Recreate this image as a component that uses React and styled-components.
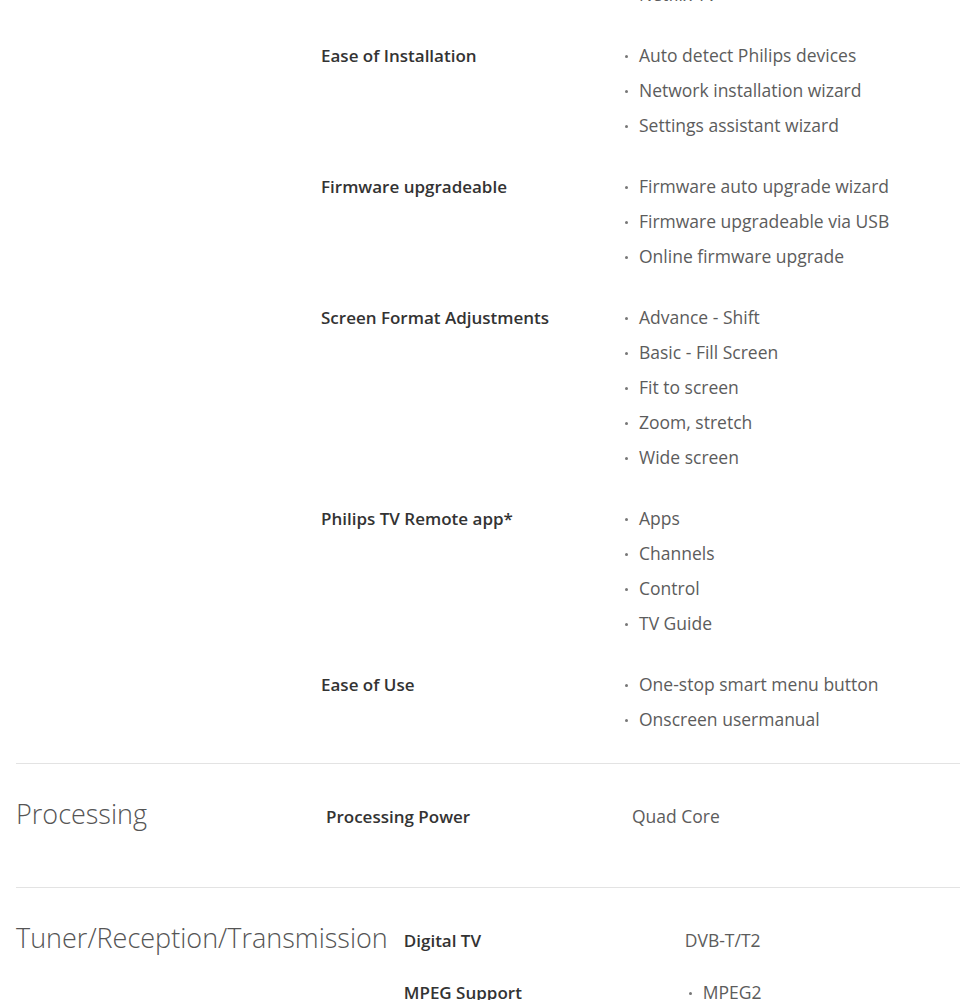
import React from "react";
import styled, { createGlobalStyle } from "styled-components";

const GlobalStyle = createGlobalStyle`
    body {
        margin: 0;
        background: #fff;
        font-family: "Open Sans", "Liberation Sans", sans-serif;
    }
`;

const sections = [
    {
        title: "",
        headW: 305,
        labelW: 303,
        pt: 0,
        pb: 0,
        top: -23,
        rows: [
            { label: "", items: ["Netflix TV"] },
            { label: "Ease of Installation", items: ["Auto detect Philips devices", "Network installation wizard", "Settings assistant wizard"] },
            { label: "Firmware upgradeable", items: ["Firmware auto upgrade wizard", "Firmware upgradeable via USB", "Online firmware upgrade"] },
            { label: "Screen Format Adjustments", items: ["Advance - Shift", "Basic - Fill Screen", "Fit to screen", "Zoom, stretch", "Wide screen"] },
            { label: "Philips TV Remote app*", items: ["Apps", "Channels", "Control", "TV Guide"] },
            { label: "Ease of Use", items: ["One-stop smart menu button", "Onscreen usermanual"] },
        ],
    },
    {
        title: "Processing",
        headW: 310,
        labelW: 306,
        pt: 35,
        pb: 36,
        rows: [{ label: "Processing Power", value: "Quad Core" }],
    },
    {
        title: "Tuner/Reception/Transmission",
        headW: 310,
        labelW: 281,
        pt: 35,
        pb: 36,
        rows: [
            { label: "Digital TV", value: "DVB-T/T2" },
            { label: "MPEG Support", items: ["MPEG2"], indent: 3 },
        ],
    },
];

const App = () => {
    return (
        <>
            <GlobalStyle />
            <Page>
                {sections.map((s, i) => (
                    <Section key={i} $pt={s.pt} $pb={s.pb} $top={s.top || 0} $last={i === sections.length - 1}>
                        <Heading $w={s.headW}>{s.title}</Heading>
                        <Table>
                            {s.rows.map((r, j) => (
                                <Row key={j} $labelW={s.labelW}>
                                    <Label>{r.label}</Label>
                                    {r.items ? (
                                        <List $indent={r.indent || 0}>
                                            {r.items.map((it) => (
                                                <Item key={it}>{it}</Item>
                                            ))}
                                        </List>
                                    ) : (
                                        <Value>{r.value}</Value>
                                    )}
                                </Row>
                            ))}
                        </Table>
                    </Section>
                ))}
            </Page>
        </>
    );
};

export default App;

const Page = styled.div`
    padding-left: 16px;
    overflow: hidden;
    height: 1000px;
`;

const Section = styled.section`
    display: flex;
    align-items: flex-start;
    margin-top: ${(p) => p.$top}px;
    padding-top: ${(p) => p.$pt}px;
    padding-bottom: ${(p) => p.$pb}px;
    border-bottom: ${(p) => (p.$last ? "none" : "1px solid #e3e3e3")};
`;

const Heading = styled.h2`
    flex: 0 0 auto;
    min-width: ${(p) => p.$w}px;
    margin: 0;
    padding-right: 16px;
    box-sizing: border-box;
    font-size: 27px;
    font-weight: 300;
    line-height: 29px;
    color: #555;
`;

const Table = styled.div`
    flex: 1;
    display: flex;
    flex-direction: column;
`;

const Row = styled.div`
    display: grid;
    grid-template-columns: ${(p) => p.$labelW}px 1fr;
    padding-bottom: 17px;
`;

const Label = styled.div`
    font-size: 17px;
    font-weight: 600;
    line-height: 35px;
    color: #333;
`;

const Value = styled.div`
    font-size: 17.5px;
    line-height: 35px;
    color: #5c5c5c;
`;

const List = styled.ul`
    list-style: none;
    margin: 0 0 9px;
    padding: 0 0 0 ${(p) => p.$indent}px;
`;

const Item = styled.li`
    position: relative;
    padding-left: 15px;
    font-size: 17.5px;
    line-height: 35px;
    color: #5c5c5c;

    &::before {
        content: "";
        position: absolute;
        left: 1px;
        top: 17px;
        width: 3px;
        height: 3px;
        border-radius: 50%;
        background: #777;
    }
`;
